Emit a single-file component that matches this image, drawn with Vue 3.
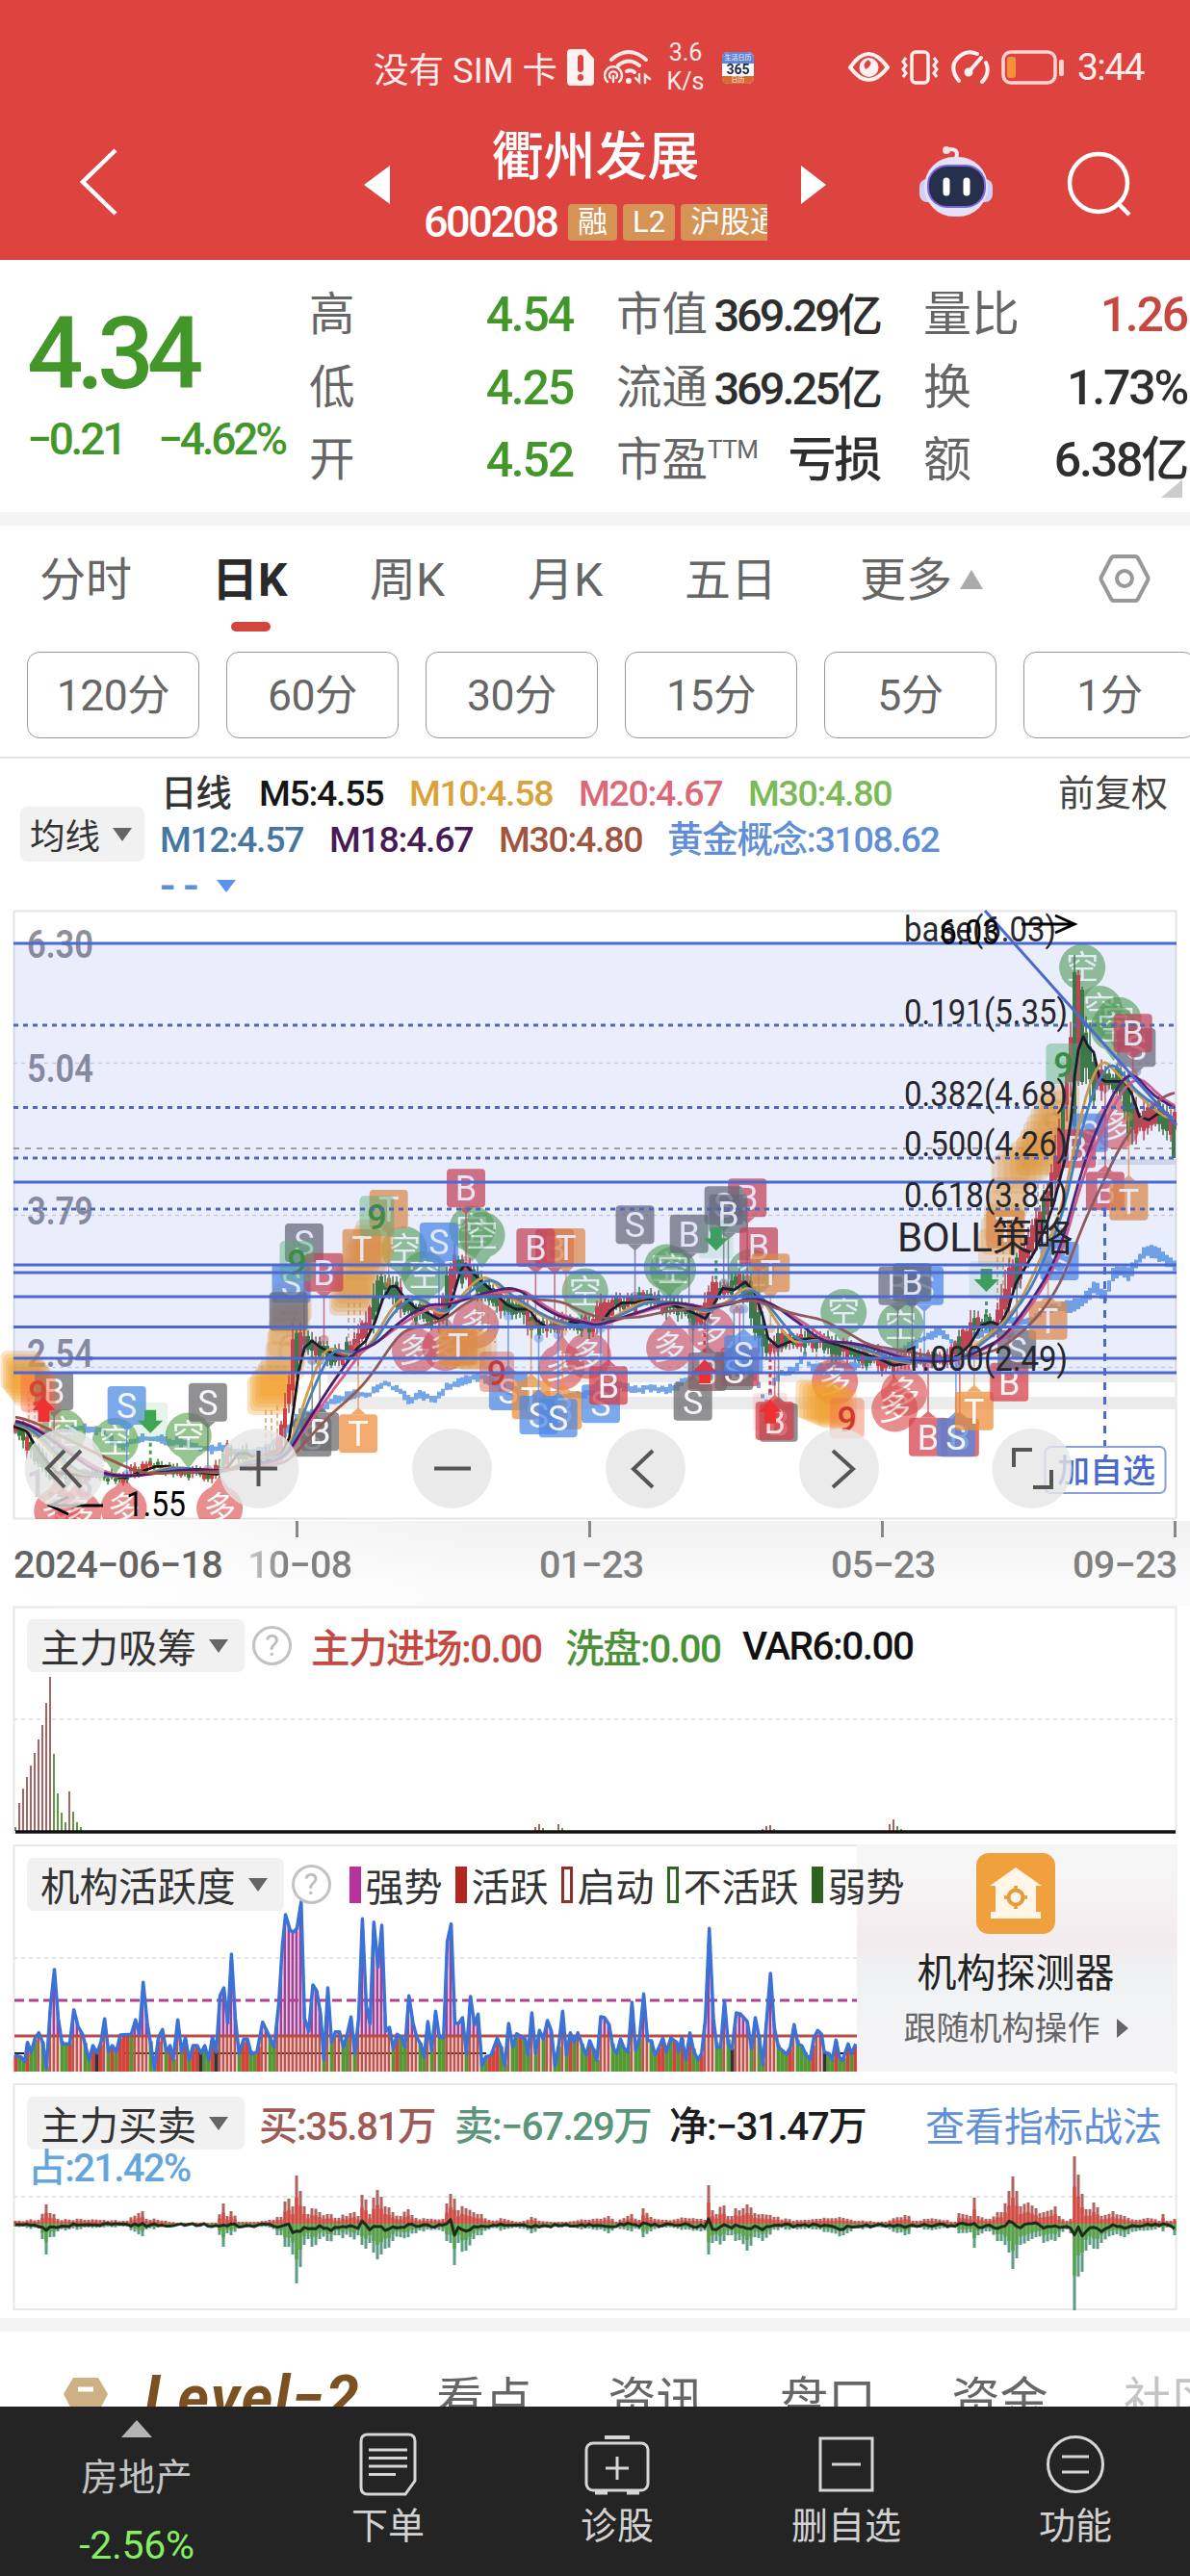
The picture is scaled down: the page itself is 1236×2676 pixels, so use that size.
<script setup>
const stats = [
  [
    { label: '高', value: '4.54', tone: 'down' },
    { label: '低', value: '4.25', tone: 'down' },
    { label: '开', value: '4.52', tone: 'down' },
  ],
  [
    { label: '市值', value: '369.29亿', tone: 'tight' },
    { label: '流通', value: '369.25亿', tone: 'tight' },
    { label: '市盈', sup: 'TTM', value: '亏损' },
  ],
  [
    { label: '量比', value: '1.26', tone: 'up', wide: true },
    { label: '换', value: '1.73%' },
    { label: '额', value: '6.38亿' },
  ],
]

const periods = ['120分', '60分', '30分', '15分', '5分', '1分']

const maRows = [
  [
    { text: '日线', color: '#333', w: 102 },
    { text: 'M5:4.55', color: '#151515', w: 156 },
    { text: 'M10:4.58', color: '#d9a23c', w: 176 },
    { text: 'M20:4.67', color: '#dc6878', w: 176 },
    { text: 'M30:4.80', color: '#7cb957', w: 150 },
  ],
  [
    { text: 'M12:4.57', color: '#4677a3', w: 176 },
    { text: 'M18:4.67', color: '#471b55', w: 176 },
    { text: 'M30:4.80', color: '#a0553f', w: 175 },
    { text: '黄金概念:3108.62', color: '#618fd5', w: 300 },
  ],
]

// seeded noise, so the candles look the same on every load
let seed = 11
const rand = () => {
  seed = (seed * 16807) % 2147483647
  return seed / 2147483647
}

// chart grid units -> pixels
const SX = 2.529
const px = (u) => u / SX
const py = (v) => 1200 + v / 3

const toPoints = (left, right) => {
  const out = []
  for (let i = 0; i < left.length; i += 2) out.push([left[i], left[i + 1]])
  for (let i = 0; i < right.length; i += 2) out.push([right[i] + 1558, right[i + 1]])
  return out
}

const valueAt = (pts, u) => {
  if (u <= pts[0][0]) return pts[0][1]
  for (let i = 1; i < pts.length; i++) {
    if (u <= pts[i][0]) {
      const [a, b] = [pts[i - 1], pts[i]]
      return a[1] + ((b[1] - a[1]) * (u - a[0])) / (b[0] - a[0] || 1)
    }
  }
  return pts[pts.length - 1][1]
}

const m5 = toPoints(
  [36, 845, 70, 860, 90, 900, 120, 950, 150, 990, 230, 1000, 280, 998, 330, 1005, 375, 985, 410, 970, 440, 970, 500, 985, 570, 995, 600, 970, 625, 930, 650, 930, 690, 960, 740, 930, 760, 880, 770, 800, 785, 670, 800, 600, 820, 578, 840, 598, 860, 610, 885, 625, 915, 635, 940, 600, 960, 580, 985, 520, 1005, 450, 1025, 410, 1040, 408, 1060, 440, 1090, 475, 1120, 490, 1155, 512, 1175, 495, 1190, 440, 1210, 360, 1222, 340, 1240, 365, 1270, 400, 1300, 430, 1330, 465, 1355, 480, 1390, 480, 1410, 515, 1435, 535, 1480, 535, 1500, 520, 1530, 525, 1568, 530],
  [20, 525, 45, 485, 75, 460, 110, 460, 150, 450, 190, 460, 240, 480, 280, 500, 295, 510, 315, 470, 340, 415, 370, 420, 400, 395, 425, 430, 445, 500, 460, 570, 485, 597, 520, 580, 570, 572, 610, 580, 640, 590, 690, 610, 740, 630, 790, 655, 820, 650, 860, 635, 920, 640, 960, 625, 990, 590, 1020, 530, 1045, 520, 1070, 530, 1090, 480, 1110, 400, 1130, 360, 1160, 300, 1190, 220, 1210, 150, 1225, 80, 1240, 10, 1255, -110, 1265, -250, 1275, -330, 1287, -370, 1300, -340, 1315, -320, 1330, -240, 1345, -230, 1395, -230, 1415, -190, 1435, -120, 1460, -110, 1485, -130, 1510, -120, 1530, -100],
)
const sector = toPoints(
  [40, 850, 110, 870, 180, 860, 220, 850, 260, 855, 300, 890, 320, 910, 370, 880, 430, 890, 480, 895, 530, 915, 590, 910, 650, 935, 700, 915, 740, 880, 790, 800, 830, 800, 870, 770, 920, 750, 970, 745, 1010, 710, 1050, 735, 1075, 765, 1110, 745, 1145, 765, 1170, 725, 1210, 710, 1250, 690, 1300, 710, 1350, 750, 1400, 765, 1450, 770, 1500, 745, 1568, 745],
  [15, 745, 60, 710, 100, 730, 150, 728, 210, 730, 260, 690, 320, 640, 370, 630, 430, 700, 455, 780, 480, 690, 530, 665, 556, 625, 575, 665, 640, 655, 700, 655, 760, 620, 830, 600, 880, 565, 910, 545, 950, 590, 1000, 560, 1060, 545, 1090, 510, 1150, 520, 1180, 480, 1230, 475, 1280, 460, 1320, 410, 1345, 440, 1370, 360, 1410, 370, 1450, 300, 1490, 310, 1530, 350],
)

const COUNT = 302
const closeAt = (i) => (i < 0 ? 848 + i * 2.2 : valueAt(m5, (16 + i * 4 + 7) * SX))
const average = (n) => {
  const pts = []
  for (let i = 0; i < COUNT; i++) {
    let sum = 0
    for (let k = 0; k < n; k++) sum += closeAt(i - k)
    pts.push(`${16 + i * 4},${py(sum / n).toFixed(1)}`)
  }
  return pts.join(' ')
}

const averages = [
  { color: '#15151a', pts: m5.map((p) => `${px(p[0]).toFixed(1)},${py(p[1]).toFixed(1)}`).join(' ') },
  { color: '#dba03d', pts: average(10) },
  { color: '#4681b8', pts: average(12) },
  { color: '#dd5d80', pts: average(20) },
  { color: '#4e1a68', pts: average(18) },
  { color: '#99584b', pts: average(30) },
]

const candles = []
for (let i = 0; i < COUNT; i++) {
  const x = 16 + i * 4
  const mid = py(closeAt(i))
  const slope = py(closeAt(i + 1)) - py(closeAt(i - 1))
  const size = (x < 300 ? 4 : x > 1120 ? 20 : 10) + Math.min(Math.abs(slope) * 1.2, 34)
  const up = slope < -1 ? rand() < 0.75 : slope > 1 ? rand() < 0.3 : rand() < 0.5
  const h = size * (0.45 + rand() * 0.8)
  candles.push({ x, y: mid - h / 2 + (rand() - 0.5) * 8, h, up, wick: 2 + rand() * size * 0.45 })
}
candles.push({ x: 1116, y: 1010, h: 160, up: false, wick: 18 })
candles.push({ x: 1120, y: 1013, h: 110, up: true, wick: 5 })
candles.push({ x: 1124, y: 1028, h: 96, up: false, wick: 3 })
candles.push({ x: 1219, y: 1165, h: 38, up: false, wick: 0 })

const sectorTicks = []
for (let i = 0; i < COUNT; i++) {
  const x = 16 + i * 4
  const h = (x > 1100 ? 9 : 4) + rand() * 6
  sectorTicks.push({ x, y: py(valueAt(sector, x * SX)) - h / 2 + (rand() - 0.5) * 3, h })
}

const fills = { red: '#d6404a', gray: '#6b6b70', blue: '#4f8ae6', orange: '#ee8f3c' }
// letter, colour, x, y, end of the stem
const L = [
  ['S', 'gray', 799, 273, 600], ['S', 'blue', 765, 400, 0], ['', 'gray', 758, 487, 0], ['B', 'red', 851, 365, 575],
  ['T', 'orange', 950, 290, 0], ['T', 'orange', 1021, 168, 400], ['S', 'blue', 1153, 270, 480], ['B', 'red', 1224, 103, 330],
  ['B', 'red', 1457, 290, 530], ['T', 'orange', 1487, 288, 520], ['B', 'red', 1407, 288, 520], ['T', 'orange', 1203, 595, 0],
  ['B', 'gray', 142, 735, 970], ['S', 'blue', 333, 780, 995], ['S', 'gray', 546, 770, 980],
  ['S', 'gray', 820, 880, 640], ['B', 'gray', 840, 862, 640], ['T', 'orange', 941, 868, 600],
  ['S', 'blue', 1335, 735, 500], ['T', 'orange', 1395, 763, 530], ['B', 'orange', 1478, 795, 550], ['S', 'blue', 1415, 810, 570], ['S', 'blue', 1466, 820, 560],
]
const R = [
  ['S', 'gray', 110, 217, 440], ['B', 'gray', 252, 245, 480], ['B', 'red', 405, 133, 390], ['S', 'gray', 343, 157, 400], ['B', 'gray', 355, 182, 410],
  ['B', 'red', 435, 285, 470], ['T', 'orange', 466, 367, 540], ['S', 'blue', 20, 775, 540], ['B', 'red', 40, 718, 530],
  ['S', 'gray', 262, 767, 520], ['B', 'gray', 300, 675, 520], ['B', 'red', 385, 660, 480], ['S', 'gray', 370, 672, 480], ['S', 'blue', 395, 622, 480], ['B', 'gray', 487, 833, 600],
  ['B', 'red', 477, 828, 600], ['B', 'gray', 800, 407, 640], ['S', 'blue', 870, 407, 640], ['B', 'gray', 838, 397, 640],
  ['B', 'red', 880, 878, 650], ['B', 'red', 963, 880, 650], ['S', 'blue', 953, 880, 650], ['T', 'orange', 1001, 797, 590],
  ['B', 'red', 1093, 707, 560], ['S', 'gray', 1113, 605, 400], ['T', 'orange', 1195, 515, 330], ['S', 'blue', 1225, 330, 240],
  ['T', 'orange', 1083, 230, 0], ['S', 'blue', 1302, -70, 0], ['B', 'red', 1270, -20, 0], ['B', 'red', 1345, 112, -210], ['T', 'orange', 1407, 143, -120],
  ['S', 'gray', 1427, -335, -260], ['B', 'red', 1418, -380, -250],
]
const badge = (b, dx) => ({
  ch: b[0],
  fill: fills[b[1]],
  x: px(b[2] + dx),
  y: py(b[3]),
  end: b[4] === 0 ? null : py(b[4]),
  tip: b[4] === 0 ? 0 : b[4] > b[3] ? 1 : -1,
})
const badges = [...L.map((b) => badge(b, 0)), ...R.map((b) => badge(b, 1558))]

const balloon = (x, y) => ({ x: px(x), y: py(y) })
const bears = [[165, 865], [303, 892], [495, 875], [1062, 295], [1115, 372], [1240, 230], [1266, 250], [1537, 425], [1752, 350], [1768, 358], [1973, 365], [2216, 490], [2366, 530], [2843, -585], [2888, -455], [2938, -420], [2925, -395]].map((p) => balloon(...p))
const bulls = [[150, 1108], [205, 1115], [325, 1100], [577, 1100], [1090, 610], [1170, 600], [1250, 530], [1475, 660], [1545, 625], [1758, 600], [1868, 545], [2193, 705], [2375, 740], [2350, 790], [2933, -90]].map((p) => balloon(...p))

// stacked translucent tiles of the 1-9 countdown
const tiles = []
const stack = (n, x0, y0, x1, y1, text = '') => {
  for (let i = 0; i < n; i++) {
    const t = i / (n - 1)
    tiles.push({ x: px(x0 + (x1 - x0) * t), y: py(y0 + (y1 - y0) * t), ch: text[i] || '' })
  }
}
stack(6, 52, 670, 85, 720)
stack(6, 768, 460, 748, 640, '9 7 6')
stack(6, 700, 750, 735, 690)
stack(5, 985, 260, 960, 330)
stack(6, 915, 440, 945, 380)
stack(5, 1195, 600, 1255, 610)
stack(7, 2140, 760, 2200, 790)
stack(6, 2655, 60, 2735, -10)
stack(8, 2720, 0, 2785, -160, '    56 8')
stack(5, 2620, 290, 2650, 130)

const nines = [
  { x: px(990), y: py(190), fill: '#57b56b', color: '#3a9130' },
  { x: px(780), y: py(330), fill: '#57b56b', color: '#3a9130' },
  { x: px(2793), y: py(-285), fill: '#57b56b', color: '#3a9130' },
  { x: px(100), y: py(738), fill: '#f36a3c', color: '#d8432f' },
  { x: px(1305), y: py(675), fill: '#e0563f', color: '#d0392f' },
  { x: px(2225), y: py(820), fill: '#f0744a', color: '#d0392f' },
]
const arrows = [
  { x: px(395), y: py(830), down: true, end: py(960) },
  { x: px(1881), y: py(262), down: true, end: py(400) },
  { x: px(2591), y: py(390), down: true, end: py(520) },
  { x: px(115), y: py(795), down: false },
  { x: px(1851), y: py(675), down: false, end: py(540) },
  { x: px(2023), y: py(800), down: false, end: py(600) },
]

const solid = [980, 1228, 1314, 1322, 1347, 1378.5, 1411, 1426]
const dotted = [1065, 1150.5, 1203, 1256]
const scale = [
  ['6.30', 995], ['5.04', 1124], ['3.79', 1272], ['2.54', 1420], ['1.28', 1555],
]
const fib = [
  ['base(6.03)', 978, 158], ['0.191(5.35)', 1064, 170], ['0.382(4.68)', 1149, 170],
  ['0.500(4.26)', 1201, 170], ['0.618(3.84)', 1254, 170], ['1.000(2.49)', 1424, 170],
]

// 主力吸筹: x, height, colour
const absorb = [
  [16, 4, 'g'], [20, 29, 'r'], [24, 44, 'r'], [28, 56, 'r'], [32, 68, 'r'], [36, 81, 'r'], [40, 95, 'r'], [44, 110, 'r'], [48, 133, 'r'], [52, 160, 'r'],
  [56, 80, 'g'], [60, 39, 'g'], [64, 19, 'g'], [68, 9, 'g'], [72, 41, 'r'], [76, 20, 'g'], [80, 9, 'g'], [84, 4, 'g'],
  [556, 4, 'r'], [560, 7, 'r'], [564, 3, 'g'], [580, 7, 'r'], [584, 3, 'g'], [792, 2, 'r'], [796, 5, 'r'], [800, 6, 'r'], [804, 2, 'g'],
  [924, 7, 'r'], [928, 12, 'r'], [932, 5, 'g'], [936, 2, 'g'],
]

const activity = toPoints(
  [38, 675, 55, 680, 65, 695, 72, 635, 82, 665, 92, 622, 102, 605, 112, 635, 122, 715, 132, 530, 143, 408, 153, 560, 163, 640, 183, 640, 194, 533, 205, 585, 217, 610, 234, 690, 244, 645, 255, 668, 265, 635, 275, 562, 285, 665, 295, 645, 305, 665, 316, 612, 345, 610, 356, 565, 366, 610, 376, 448, 387, 575, 397, 650, 406, 718, 416, 620, 427, 595, 437, 665, 447, 645, 455, 690, 467, 565, 477, 665, 487, 620, 497, 690, 507, 645, 518, 645, 528, 668, 538, 645, 548, 690, 558, 618, 568, 665, 578, 490, 588, 465, 598, 575, 608, 360, 618, 560, 628, 670, 640, 625, 650, 625, 660, 672, 675, 665, 690, 572, 705, 610, 720, 650, 732, 520, 742, 330, 750, 237, 762, 285, 770, 292, 780, 280, 791, 197, 800, 560, 811, 600, 822, 456, 832, 475, 842, 545, 851, 690, 861, 465, 871, 635, 881, 602, 892, 602, 902, 650, 912, 610, 922, 556, 932, 670, 942, 560, 952, 250, 962, 520, 972, 578, 982, 260, 993, 400, 1003, 270, 1013, 600, 1023, 588, 1033, 655, 1043, 610, 1055, 620, 1064, 650, 1074, 490, 1085, 575, 1095, 620, 1105, 640, 1114, 680, 1124, 570, 1134, 660, 1144, 538, 1154, 618, 1165, 620, 1175, 320, 1185, 266, 1195, 575, 1205, 575, 1215, 558, 1225, 670, 1236, 492, 1246, 580, 1256, 547, 1266, 708, 1276, 680, 1290, 675, 1306, 622, 1316, 650, 1326, 708, 1336, 576, 1347, 650, 1357, 608, 1380, 625, 1387, 675, 1397, 543, 1407, 670, 1417, 598, 1427, 625, 1438, 567, 1448, 598, 1458, 708, 1468, 640, 1478, 538, 1488, 675, 1498, 605, 1508, 635, 1518, 605, 1528, 640, 1540, 675, 1549, 630, 1560, 660],
  [10, 690, 20, 555, 30, 558, 42, 580, 52, 650, 62, 670, 72, 625, 82, 655, 92, 665, 102, 510, 112, 660, 122, 620, 133, 484, 143, 630, 153, 630, 163, 675, 173, 650, 183, 622, 193, 665, 204, 622, 220, 635, 224, 665, 233, 620, 244, 690, 254, 605, 264, 660, 275, 690, 285, 670, 295, 560, 305, 280, 316, 560, 325, 650, 335, 650, 345, 505, 355, 640, 365, 655, 376, 543, 387, 547, 405, 570, 416, 655, 426, 558, 436, 620, 446, 705, 456, 560, 466, 420, 476, 590, 487, 650, 497, 660, 508, 672, 518, 650, 528, 580, 538, 640, 548, 645, 560, 675, 570, 688, 580, 620, 590, 598, 600, 610, 607, 665, 620, 670, 628, 690, 638, 628, 648, 685, 655, 692, 670, 640, 678, 670, 690, 640],
)
const activityLine = activity.map((p) => `${px(p[0]).toFixed(1)},${(1910 + p[1] / 3).toFixed(1)}`).join(' ')
const activityBars = []
for (let i = 0; i < 219; i++) {
  const x = 16 + i * 4
  const v = valueAt(activity, x * SX)
  const y = 1910 + v / 3
  const hot = y < 2113
  const rising = valueAt(activity, (x - 4) * SX) > v - 2
  const color = hot ? '#c1514b' : [21, 48, 52, 186, 208, 210].includes(i) ? '#333' : rising && rand() < 0.8 ? '#d3433a' : '#549834'
  activityBars.push({ x, y, hot, color, w: hot ? 2.8 : 4.2 })
}

// 主力买卖: x, buy height, sell height
const flow = [
  [15, 3, 3], [40, 4, 5], [47, 20, 32], [52, 11, 14], [60, 5, 8], [90, 4, 4], [130, 3, 3], [148, 13, 13], [153, 5, 6], [165, 4, 4], [185, 1, 1], [225, 1, 2],
  [232, 21, 24], [237, 8, 10], [241, 13, 12], [250, 2, 4], [265, 2, 3], [280, 4, 4], [290, 7, 12], [296, 23, 24], [300, 26, 24], [304, 18, 32], [308, 50, 62], [312, 34, 45], [316, 18, 22], [320, 10, 16],
  [325, 16, 24], [332, 12, 16], [340, 10, 18], [350, 6, 12], [365, 11, 14], [372, 8, 12], [376, 30, 22], [380, 25, 26], [384, 10, 20], [388, 27, 30], [392, 35, 37], [396, 28, 32], [400, 18, 26], [408, 12, 18], [416, 8, 14], [424, 15, 14], [432, 6, 10], [445, 5, 6], [460, 5, 8],
  [464, 21, 18], [468, 31, 20], [472, 26, 43], [476, 14, 20], [484, 16, 28], [492, 12, 16], [498, 10, 12], [508, 4, 6], [525, 5, 6], [540, 2, 5], [553, 7, 10], [560, 3, 5], [580, 2, 4], [610, 4, 5], [625, 5, 6], [632, 8, 10], [640, 2, 4],
  [656, 10, 8], [664, 4, 6], [668, 16, 14], [676, 7, 8], [690, 4, 4], [712, 6, 6], [728, 5, 8], [732, 4, 7], [736, 40, 32], [740, 14, 20], [744, 10, 18], [752, 19, 18], [758, 8, 12], [764, 16, 18], [776, 20, 28], [784, 11, 14], [792, 10, 18], [804, 7, 6], [825, 3, 5],
  [850, 5, 6], [876, 6, 12], [890, 3, 5], [920, 2, 4], [940, 9, 12], [950, 3, 4], [972, 5, 6], [992, 2, 3], [996, 11, 10], [1008, 8, 9], [1012, 27, 25], [1016, 8, 12], [1028, 5, 8], [1040, 12, 18], [1048, 34, 30], [1052, 49, 47], [1056, 34, 36], [1060, 18, 22],
  [1068, 22, 18], [1076, 16, 14], [1084, 12, 20], [1096, 18, 18], [1100, 8, 14], [1108, 3, 6], [1112, 5, 10], [1116, 70, 90], [1120, 51, 55], [1124, 31, 50], [1128, 15, 28], [1136, 22, 26], [1144, 8, 20], [1156, 13, 12], [1168, 8, 14], [1180, 4, 8], [1192, 6, 7], [1204, 3, 4], [1208, 10, 8], [1214, 3, 4], [1220, 5, 12],
]
const buys = flow.map((f) => [f[0], f[1]])
const sells = flow.map((f) => [f[0], f[2]])
const flowBars = []
const net = []
for (let i = 0; i < COUNT; i++) {
  const x = 16 + i * 4
  const k = 0.75 + rand() * 0.5
  const near = flow.find((f) => Math.abs(f[0] - x) < 2.1)
  const buy = near ? near[1] : valueAt(buys, x) * k
  const sell = near ? near[2] : valueAt(sells, x) * k
  flowBars.push({ x, buy, sell })
  net.push(`${x},${(2311 + Math.max(-11, Math.min(17, (sell - buy) * 0.6)) + (rand() - 0.5) * 3).toFixed(1)}`)
}

const signals = [
  { name: '强势', color: '#b8319d', solid: true },
  { name: '活跃', color: '#b42720', solid: true },
  { name: '启动', color: '#8e3029', solid: false },
  { name: '不活跃', color: '#346326', solid: false },
  { name: '弱势', color: '#2b621d', solid: true },
]
</script>

<template>
  <div class="screen">
    <header class="top">
      <div class="status">
        <span class="sim-text">没有 SIM 卡</span>
        <svg class="i-sim" width="28" height="38" viewBox="0 0 28 38"><path d="M4 0H19L28 10V34Q28 38 24 38H4Q0 38 0 34V4Q0 0 4 0Z" fill="#fff1f0" /><path d="M14 9V21M14 29V30" stroke="#dd4440" stroke-width="6" stroke-linecap="round" /></svg>
        <svg class="i-wifi" width="50" height="38" viewBox="0 0 50 38" fill="none" stroke="#ffe9e7" stroke-width="4" stroke-linecap="round">
          <path d="M8 11Q26 -5 44 11M15 17Q26 8 37 17" /><path d="M24 23Q28 21 32 24" />
          <circle cx="26" cy="33" r="3" fill="#ffe9e7" stroke="none" />
          <path d="M4 34A9 9 0 1 1 16 34M7 30A4 4 0 1 1 13 30M10 28V34" stroke-width="2.400" />
          <path d="M37 26V34L33 30M43 35V27L48 31" stroke-width="2.400" />
        </svg>
        <div class="speed"><span>3.6</span><span>K/s</span></div>
        <div class="app365"><i>生活日历</i><b>365</b><em>日历</em></div>
        <svg class="i-eye" width="43" height="32" viewBox="0 0 43 32"><path d="M2 16Q21 -12 41 16Q21 42 2 16Z" fill="none" stroke="#fff1f0" stroke-width="4" /><circle cx="21.500" cy="16" r="10" fill="#fff1f0" /><path d="M21 8Q27 13 18 18Q14 12 21 8Z" fill="#dd4440" /></svg>
        <svg class="i-vib" width="43" height="36" viewBox="0 0 43 36" fill="none" stroke="#fff1f0" stroke-width="3.500"><rect x="13" y="2" width="17" height="32" rx="4" /><path d="M7 8L4 12L7 16L4 20L7 24L4 28M36 8L39 12L36 16L39 20L36 24L39 28" stroke-width="3" /></svg>
        <svg class="i-gauge" width="40" height="36" viewBox="0 0 40 36" fill="none" stroke="#fff1f0" stroke-width="4" stroke-linecap="round"><path d="M8 32Q-3 18 7 8Q16 -1 27 4M36 13Q41 24 32 33M18 23L31 8" /><circle cx="18" cy="23" r="2.500" /></svg>
        <svg class="i-bat" width="66" height="36" viewBox="0 0 66 36"><rect x="2" y="2" width="54" height="32" rx="8" fill="none" stroke="#fbd3cf" stroke-width="3.500" /><rect x="6" y="7" width="9" height="22" rx="3" fill="#f3923a" /><rect x="60" y="10" width="5" height="17" rx="2" fill="#fbd3cf" /></svg>
        <span class="clock">3:44</span>
      </div>
      <div class="nav">
        <svg class="back" width="40" height="70" viewBox="0 0 40 70"><path d="M37 2L3 35L37 68" fill="none" stroke="#fff" stroke-width="4.500" /></svg>
        <svg class="prev" width="27" height="40" viewBox="0 0 27 40"><path d="M27 0V40L0 20Z" fill="#fff" /></svg>
        <div class="stock">
          <h1>衢州发展</h1>
          <div class="code">
            <span class="num">600208</span>
            <i>融</i><i>L2</i><i>沪股通</i>
          </div>
        </div>
        <svg class="next" width="26" height="40" viewBox="0 0 26 40"><path d="M0 0V40L26 20Z" fill="#fff" /></svg>
        <svg class="robot" width="80" height="74" viewBox="0 0 80 74">
          <path d="M40 12Q44 2 31 3" fill="none" stroke="#f3e7f5" stroke-width="4" stroke-linecap="round" /><circle cx="30" cy="4" r="4" fill="#f7dede" />
          <rect x="2" y="34" width="76" height="24" rx="8" fill="#cfd0f4" />
          <rect x="7" y="11" width="66" height="62" rx="31" fill="#e4e1f8" />
          <rect x="11" y="20" width="59" height="43" rx="20" fill="#27304a" stroke="#7b65d8" stroke-width="2" />
          <path d="M30 36V48M51 36V48" stroke="#fff" stroke-width="7" stroke-linecap="round" />
        </svg>
        <svg class="search" width="68" height="68" viewBox="0 0 68 68" fill="none" stroke="#fff" stroke-width="4.500"><circle cx="33" cy="33" r="30" /><path d="M53 54L65 66" /></svg>
      </div>
    </header>

    <section class="quote">
      <div class="price">
        <div class="last">4.34</div>
        <div class="change"><span>−0.21</span><span>−4.62%</span></div>
      </div>
      <div v-for="(col, c) in stats" :key="c" class="col">
        <div v-for="s in col" :key="s.label" class="stat">
          <span class="label" :class="{ wide: s.wide || c === 2 }">{{ s.label }}<sup v-if="s.sup">{{ s.sup }}</sup></span>
          <span class="value" :class="s.tone">{{ s.value }}</span>
        </div>
      </div>
      <svg class="corner" width="22" height="19" viewBox="0 0 22 19"><path d="M22 0V19H0Z" fill="#ccc" /></svg>
    </section>

    <nav class="tabs">
      <span class="tab t1">分时</span>
      <span class="tab t2 active">日K</span>
      <span class="tab t3">周K</span>
      <span class="tab t4">月K</span>
      <span class="tab t5">五日</span>
      <span class="tab t6">更多<svg width="24" height="20" viewBox="0 0 24 20"><path d="M12 0L24 20H0Z" fill="#aaa" /></svg></span>
      <svg class="hex" width="54" height="50" viewBox="0 0 54 50" fill="none" stroke="#999" stroke-width="4"><path d="M16 2H38Q40 2 41 4L51 23Q52 25 51 27L41 46Q40 48 38 48H16Q14 48 13 46L3 27Q2 25 3 23L13 4Q14 2 16 2Z" /><circle cx="27" cy="25" r="8" /></svg>
    </nav>
    <div class="periods">
      <span v-for="p in periods" :key="p">{{ p }}</span>
    </div>

    <section class="legend">
      <div class="picker small">均线<svg width="20" height="14" viewBox="0 0 20 14"><path d="M0 0H20L10 14Z" fill="#666" /></svg></div>
      <div class="ma">
        <div v-for="(row, r) in maRows" :key="r" class="ma-row">
          <span v-for="m in row" :key="m.text" :style="{ color: m.color, width: m.w + 'px' }">{{ m.text }}</span>
        </div>
        <div class="ma-row more">--<svg width="20" height="13" viewBox="0 0 20 13"><path d="M0 0H20L10 13Z" fill="#5b93e8" /></svg></div>
      </div>
      <span class="adjust">前复权</span>
    </section>

    <svg class="kline" width="1236" height="638" viewBox="0 942 1236 638">
      <defs>
        <clipPath id="plot"><rect x="14" y="946" width="1208" height="632" /></clipPath>
      </defs>
      <rect x="14.500" y="946.500" width="1207" height="631" fill="#fff" stroke="#e4e4e4" stroke-width="2" />
      <rect x="340" y="1427" width="882" height="9" fill="#ebebeb" />
      <rect x="340" y="1451" width="882" height="13" fill="#ebebeb" />
      <rect x="1140" y="1204" width="82" height="6" fill="#e2e2ea" />
      <path d="M14 1104.500H1222M14 1262.500H1222M14 1420.500H1222" stroke="#d6d6dc" stroke-width="1.500" stroke-dasharray="4 4" />
      <path d="M14 1193H1222" stroke="#b3a48f" stroke-width="2" stroke-dasharray="6 6" />
      <g class="scale">
        <text v-for="s in scale" :key="s[0]" x="28" :y="s[1]" textLength="69" lengthAdjust="spacingAndGlyphs">{{ s[0] }}</text>
      </g>

      <g clip-path="url(#plot)">
        <rect v-for="t in sectorTicks" :key="'s' + t.x" :x="t.x - 2" :y="t.y" width="4" :height="t.h" fill="#74a6e8" />
        <g v-for="(b, i) in bulls" :key="'u' + i" class="balloon" fill="#dc4a4c" :transform="`translate(${b.x} ${b.y})`">
          <path d="M0 -34L9 -22A24 24 0 1 1 -9 -22Z" /><text y="12">多</text>
        </g>
        <g v-for="(b, i) in bears" :key="'d' + i" class="balloon" fill="#58a24c" :transform="`translate(${b.x} ${b.y})`">
          <path d="M0 34L9 22A24 24 0 1 0 -9 22Z" /><text y="12">空</text>
        </g>
      </g>
      <path d="M30 1452V1478M36 1452V1485M42 1452V1490M553 1440V1470M760 1390V1430" stroke="#dd9351" stroke-width="1" stroke-dasharray="4 2" />
      <path d="M276 1465V1510M282 1465V1505M288 1460V1500M362 1345V1405M368 1345V1400M374 1345V1395M495 1340V1375M501 1340V1378M507 1340V1385M514 1345V1395M848 1390V1415M856 1392V1420M866 1395V1425M1036 1290V1370M1042 1290V1365M1049 1290V1360M1078 1230V1290M1084 1230V1270" stroke="#d7853c" stroke-width="1.200" stroke-dasharray="5 3" />

      <g v-for="(t, i) in tiles" :key="'t' + i" class="tile">
        <rect :x="t.x - 20" :y="t.y - 20" width="40" height="40" rx="6" />
        <text :x="t.x" :y="t.y + 13">{{ t.ch }}</text>
      </g>

      <g v-for="c in candles" :key="'c' + c.x + c.y">
        <rect :x="c.x - 0.7" :y="c.y - c.wick" width="1.500" :height="c.h + c.wick * 2" :fill="c.up ? '#cd4144' : '#3d7a37'" />
        <rect :x="c.x - 2" :y="c.y" width="4" :height="c.h" :fill="c.up ? '#cd4144' : '#3d7a37'" />
      </g>

      <g v-for="(b, i) in badges" :key="'b' + i" class="badge">
        <g class="plate">
          <line v-if="b.end" :x1="b.x" :x2="b.x" :y1="b.y + b.tip * 24" :y2="b.end" :stroke="b.fill" stroke-width="1.600" />
          <circle v-if="b.end" :cx="b.x" :cy="b.end" r="5" :fill="b.fill" opacity=".6" />
          <rect :x="b.x - 20" :y="b.y - 20" width="40" height="40" rx="4" :fill="b.fill" />
          <path v-if="b.tip" :d="`M${b.x - 8} ${b.y + b.tip * 20}H${b.x + 8}L${b.x} ${b.y + b.tip * 27}Z`" :fill="b.fill" />
        </g>
        <text :x="b.x" :y="b.y + 13">{{ b.ch }}</text>
      </g>
      <g v-for="(n, i) in nines" :key="'n' + i" class="nine">
        <rect :x="n.x - 18" :y="n.y - 21" width="36" height="42" rx="5" :fill="n.fill" />
        <text :x="n.x" :y="n.y + 14" :fill="n.color">9</text>
      </g>
      <g v-for="(a, i) in arrows" :key="'a' + i">
        <rect :x="a.x - 18" :y="a.y - 20" width="36" height="40" rx="4" :fill="a.down ? '#56b56a' : '#f05050'" opacity=".15" />
        <path :d="a.down ? 'M-6 -12H6V-1H13L0 12L-13 -1H-6Z' : 'M-6 12H6V0H12L0 -13L-12 0H-6Z'" :transform="`translate(${a.x} ${a.y})`" :fill="a.down ? '#3ea552' : '#ee3033'" />
        <line v-if="a.end" :x1="a.x" :x2="a.x" :y1="a.y + (a.down ? 22 : -20)" :y2="a.end" :stroke="a.down ? '#3ea552' : '#ee3033'" stroke-width="3" stroke-dasharray="4 4" />
      </g>

      <g fill="none" stroke-width="2.800" stroke-linejoin="round">
        <polyline v-for="(m, i) in averages" :key="'m' + i" :points="m.pts" :stroke="m.color" />
      </g>

      <!-- drawn fibonacci zone -->
      <rect x="14" y="980" width="1208" height="446" fill="#4a66e6" opacity=".115" />
      <path v-for="y in solid" :key="'l' + y" :d="`M14 ${y}H1222`" stroke="#4b69cf" stroke-width="3" />
      <path v-for="y in dotted" :key="'o' + y" :d="`M14 ${y}H1222`" stroke="#4f68b8" stroke-width="3" stroke-dasharray="5 5" />
      <path d="M1023 946L1222 1169" stroke="#4b69cf" stroke-width="3" />
      <path d="M1147.500 1256V1503" stroke="#4b69cf" stroke-width="3" stroke-dasharray="8 7" />
      <g class="fib">
        <text v-for="f in fib" :key="f[0]" x="939" :y="f[1]" :textLength="f[2]" lengthAdjust="spacingAndGlyphs">{{ f[0] }}</text>
        <text x="976" y="981" textLength="62" lengthAdjust="spacingAndGlyphs" class="peak">6.03</text>
        <text x="932" y="1300" textLength="182" class="boll">BOLL策略</text>
      </g>
      <path d="M1061 960H1115M1096 951L1116 960L1096 969" fill="none" stroke="#000" stroke-width="3" />
      <path d="M107 1564H52M71 1573L52 1564L71 1555" fill="none" stroke="#000" stroke-width="3" />
      <text x="131" y="1575" class="low" textLength="62" lengthAdjust="spacingAndGlyphs">1.55</text>

      <rect x="1085.500" y="1503" width="125" height="48" rx="6" fill="#fff" stroke="#8aa0dc" stroke-width="2" />
      <text x="1098" y="1540" class="watch">加自选</text>

      <g fill="#e6e6e6" opacity=".8">
        <circle cx="67" cy="1525.500" r="41.500" /><circle cx="269" cy="1525.500" r="41.500" /><circle cx="469.500" cy="1525.500" r="41.500" />
        <circle cx="670.500" cy="1525.500" r="41.500" /><circle cx="871.500" cy="1525.500" r="41.500" /><circle cx="1072" cy="1525.500" r="41.500" />
      </g>
      <g fill="none" stroke="#555" stroke-width="4">
        <path d="M67 1507L49 1525.500L67 1545M84 1507L66 1525.500L84 1545" />
        <path d="M249 1525.500H288M268.500 1507V1544M451 1525.500H489" />
        <path d="M678 1507L658 1526L678 1545M865 1507L886 1526L865 1545" />
        <path d="M1053 1524V1506H1072M1092 1527V1545H1073" />
      </g>
    </svg>

    <div class="axis">
      <i class="k1"></i><i class="k2"></i><i class="k3"></i><i class="k4"></i>
      <span class="d0">2024−06−18</span><span class="d1">10−08</span><span class="d2">01−23</span><span class="d3">05−23</span><span class="d4">09−23</span>
    </div>

    <section class="panel p1">
      <svg width="1236" height="240" viewBox="0 1668 1236 240">
        <path d="M14.500 1905V1669.500H1221.500V1905" fill="none" stroke="#e8e8e8" stroke-width="2" />
        <path d="M14 1786H1222" stroke="#e4e4e4" stroke-width="2" stroke-dasharray="4 4" />
        <rect v-for="b in absorb" :key="b[0]" :x="b[0] - 1" :y="1902 - b[1]" width="2" :height="b[1]" :fill="b[2] === 'r' ? '#a86460' : '#5e9a44'" />
        <path d="M16 1903H1221" stroke="#111" stroke-width="3.500" />
      </svg>
      <div class="bar">
        <div class="picker">主力吸筹<svg width="20" height="14" viewBox="0 0 20 14"><path d="M0 0H20L10 14Z" fill="#666" /></svg></div>
        <span class="help">?</span>
        <span class="item a1">主力进场:0.00</span><span class="item a2">洗盘:0.00</span><span class="item a3">VAR6:0.00</span>
      </div>
    </section>

    <section class="panel p2">
      <svg width="1236" height="240" viewBox="0 1916 1236 240">
        <path d="M14.500 2154V1917H1221.500V2154" fill="none" stroke="#e8e8e8" stroke-width="2" />
        <path d="M14 2034H890" stroke="#e4e4e4" stroke-width="2" stroke-dasharray="4 4" />
        <path d="M15 2133H25M130 2133H505M870 2133H890" stroke="#222" stroke-width="2" />
        <g v-for="b in activityBars" :key="b.x">
          <rect v-if="b.hot" :x="b.x - 1.5" :y="b.y" width="2.800" :height="2115 - b.y" fill="#a03f93" />
          <rect :x="b.x - 1.5" :y="Math.max(b.y, 2115)" :width="b.w" :height="2152 - Math.max(b.y, 2115)" :fill="b.color" />
        </g>
        <path d="M15 2078H890" stroke="#ad4390" stroke-width="3" stroke-dasharray="10 5" />
        <path d="M15 2115H890" stroke="#bd4b43" stroke-width="3" />
        <polyline :points="activityLine" fill="none" stroke="#3b72d6" stroke-width="3.500" stroke-linejoin="round" />
      </svg>
      <div class="ad-wrap">
        <div class="ad">
          <svg width="82" height="84" viewBox="0 0 82 84">
            <rect width="82" height="84" rx="13" fill="#f0a03c" />
            <path d="M41 15L68 34H62V61H67V68H15V61H20V34H14Z" fill="#fff6e8" />
            <circle cx="41" cy="46" r="7.500" fill="none" stroke="#e79a3a" stroke-width="4" />
            <path d="M41 34V39M41 53V58M29 46H34M48 46H53" stroke="#e79a3a" stroke-width="3.500" />
          </svg>
          <b>机构探测器</b>
          <span>跟随机构操作<svg width="12" height="20" viewBox="0 0 12 20"><path d="M0 0L12 10L0 20Z" fill="#666" /></svg></span>
        </div>
      </div>
      <div class="bar">
        <div class="picker">机构活跃度<svg width="20" height="14" viewBox="0 0 20 14"><path d="M0 0H20L10 14Z" fill="#666" /></svg></div>
        <span class="help">?</span>
        <div class="signals">
          <span v-for="s in signals" :key="s.name"><i :style="{ borderColor: s.color, background: s.solid ? s.color : '#fff' }"></i>{{ s.name }}</span>
        </div>
      </div>
    </section>

    <section class="panel p3">
      <svg width="1236" height="244" viewBox="0 2164 1236 244">
        <rect x="14.500" y="2165" width="1207" height="234" fill="none" stroke="#e8e8e8" stroke-width="2" />
        <path d="M14 2282H1222" stroke="#e4e4e4" stroke-width="2" stroke-dasharray="4 4" />
        <g v-for="b in flowBars" :key="b.x">
          <rect :x="b.x - 1.5" :y="2310 - b.buy" width="3" :height="b.buy" fill="#b0635f" />
          <rect :x="b.x - 1.5" y="2310" width="3" :height="b.sell" fill="#5f9c86" />
          <rect :x="b.x - 1.7" :y="2310 - b.buy * 0.55" width="3.400" :height="b.buy * 0.55" fill="#d34a43" />
          <rect :x="b.x - 1.7" y="2310" width="3.400" :height="b.sell * 0.6" fill="#58a046" />
        </g>
        <polyline :points="net.join(' ')" fill="none" stroke="#1d2a17" stroke-width="3" stroke-linejoin="round" />
      </svg>
      <div class="flow-head">
        <div class="bar">
          <div class="picker">主力买卖<svg width="20" height="14" viewBox="0 0 20 14"><path d="M0 0H20L10 14Z" fill="#666" /></svg></div>
          <span class="item f1">买:35.81万</span><span class="item f2">卖:−67.29万</span><span class="item f3">净:−31.47万</span>
          <span class="link">查看指标战法</span>
        </div>
        <div class="ratio">占:21.42%</div>
      </div>
    </section>

    <div class="info-tabs">
      <svg width="46" height="42" viewBox="0 0 46 42"><path d="M10 0H36L46 17L33 42H13L0 17Z" fill="#cdb083" /><path d="M15 12H31" stroke="#fff" stroke-width="5" /></svg>
      <span class="level">Level−2</span>
      <span class="w1">看点</span><span class="w2">资讯</span><span class="w3">盘口</span><span class="w4">资金</span><span class="w5">社区</span>
    </div>

    <footer>
      <div class="sector">
        <svg width="32" height="18" viewBox="0 0 32 18"><path d="M16 0L32 18H0Z" fill="#b4b4b4" /></svg>
        <span>房地产</span>
        <b>-2.56%</b>
      </div>
      <div class="tool">
        <svg width="60" height="66" viewBox="0 0 60 66" fill="none" stroke="#d6d6d6" stroke-width="3"><path d="M9 2H51Q58 2 58 9V50L48 64H9Q2 64 2 57V9Q2 2 9 2Z" /><path d="M10 18H50M10 26.500H50M10 35H50M10 43.500H38" /></svg>
        <span>下单</span>
      </div>
      <div class="tool">
        <svg width="68" height="66" viewBox="0 0 68 66" fill="none" stroke="#d6d6d6" stroke-width="3"><path d="M21 5H47" stroke-width="4" /><rect x="2" y="11" width="64" height="49" rx="7" /><path d="M22 37H46M34 25V49" /><path d="M11 62H24M44 62H57" stroke-width="5" /></svg>
        <span>诊股</span>
      </div>
      <div class="tool">
        <svg width="58" height="66" viewBox="0 0 58 66" fill="none" stroke="#d6d6d6" stroke-width="3"><rect x="2" y="6" width="54" height="54" /><path d="M14 33H44" /></svg>
        <span>删自选</span>
      </div>
      <div class="tool">
        <svg width="62" height="66" viewBox="0 0 62 66" fill="none" stroke="#d6d6d6" stroke-width="3"><circle cx="31" cy="33" r="28.500" /><path d="M17 25H45M17 41H45" /></svg>
        <span>功能</span>
      </div>
    </footer>
  </div>
</template>

<style>
body {
  margin: 0;
  background: #fff;
}
</style>

<style scoped>
.screen {
  width: 1236px;
  height: 2676px;
  overflow: hidden;
  background: #fff;
  font-family: Roboto, "Noto Sans CJK SC", sans-serif;
  display: flex;
  flex-direction: column;
  white-space: nowrap;
}

.screen > * {
  flex-shrink: 0;
}

svg {
  display: block;
  flex-shrink: 0;
}

i, em {
  font-style: normal;
}

/* header */
.top {
  height: 270px;
  background: #dd4440;
  color: #fff;
}

.status {
  display: flex;
  align-items: center;
  height: 140px;
  padding-left: 388px;
  color: #ffeceb;
}

.sim-text {
  width: 201px;
  font-size: 36.5px;
}

.i-wifi { margin-left: 10px; }

.speed {
  display: flex;
  flex-direction: column;
  width: 40px;
  margin-left: 15px;
  font-size: 25px;
  line-height: 30px;
  text-align: center;
}

.app365 {
  display: flex;
  flex-direction: column;
  width: 33px;
  height: 33px;
  margin-left: 18px;
  overflow: hidden;
  border-radius: 6px;
  background: #fff;
  text-align: center;
}

.app365 i {
  height: 12px;
  background: #5f86d8;
  font-size: 7px;
  line-height: 12px;
}

.app365 b {
  height: 13px;
  color: #1e2c4c;
  font-size: 14px;
  line-height: 13px;
}

.app365 em {
  height: 8px;
  background: #d9692f;
  font-size: 7px;
  line-height: 8px;
}

.i-eye { margin-left: 98px; }
.i-vib { margin-left: 10px; }
.i-gauge { margin-left: 11px; }
.i-bat { margin-left: 12px; }

.clock {
  margin-left: 13px;
  font-size: 39px;
  letter-spacing: -1.6px;
}

.nav {
  display: flex;
  height: 130px;
}

.back { margin: 14px 0 0 83px; }
.prev { margin: 32px 0 0 255px; }

.stock {
  width: 357px;
  margin-left: 35px;
  margin-top: -9px;
  overflow: hidden;
}

.stock h1 {
  margin: 0;
  height: 79px;
  font-size: 54px;
  font-weight: 500;
  line-height: 66px;
  text-align: center;
}

.code {
  display: flex;
  align-items: center;
  gap: 6px;
}

.code .num {
  flex-shrink: 0;
  width: 144px;
  font-size: 45px;
  font-weight: 500;
  letter-spacing: -2.5px;
  line-height: 42px;
}

.code i {
  flex-shrink: 0;
  height: 38px;
  padding: 0 10px;
  border-radius: 4px;
  background: #d69356;
  font-size: 31px;
  line-height: 37px;
}

.next { margin: 32px 0 0 35px; }
.robot { margin: 12px 0 0 95px; }
.search { margin: 17px 0 0 75px; }

/* quote */
.quote {
  display: flex;
  position: relative;
  box-sizing: border-box;
  height: 276px;
  padding-top: 20px;
  border-bottom: 14px solid #f4f4f4;
}

.price {
  width: 293px;
  padding-left: 28px;
  color: #43962a;
}

.last {
  margin-top: 18px;
  font-size: 103px;
  font-weight: 500;
  letter-spacing: -7px;
  line-height: 120px;
}

.change {
  display: flex;
  gap: 35px;
  margin-top: 1px;
  font-size: 46px;
  font-weight: 500;
  letter-spacing: -3.2px;
  line-height: 54px;
}

.col {
  width: 274px;
  margin-right: 45px;
}

.col:nth-of-type(4) {
  margin-right: 0;
}

.stat {
  display: flex;
  justify-content: space-between;
  height: 75.5px;
  line-height: 75.5px;
}

.label {
  color: #666;
  font-size: 47.5px;
}

.label.wide {
  font-size: 50px;
}

.label sup {
  font-size: 26px;
  letter-spacing: -0.5px;
  line-height: 0;
  vertical-align: 18px;
}

.value {
  color: #2e2e2e;
  font-size: 50px;
  font-weight: 500;
  letter-spacing: -2.2px;
}

.value.down { color: #43962a; }
.value.up { color: #c5473f; }
.value.tight { font-size: 47px; letter-spacing: -3px; }

.corner {
  position: absolute;
  right: 8px;
  bottom: 15px;
}

/* period tabs */
.tabs {
  display: flex;
  position: relative;
  height: 131px;
  padding-left: 41px;
  color: #666;
  font-size: 48px;
  line-height: 112px;
}

.tab {
  display: flex;
  align-items: center;
  height: 114px;
}

.t1 { width: 179px; }
.t2 { width: 164px; }
.t3 { width: 164px; }
.t4 { width: 163px; }
.t5 { width: 182px; }
.t6 { width: 248px; }
.t6 svg { margin-left: 8px; margin-bottom: 2px; }
.hex { margin-top: 30px; }

.active {
  position: relative;
  color: #2a2a2a;
  font-weight: 700;
}

.active::after {
  content: "";
  position: absolute;
  left: 20px;
  bottom: 4px;
  width: 41px;
  height: 10px;
  border-radius: 5px;
  background: #d3443d;
}

.periods {
  display: flex;
  gap: 28px;
  height: 109px;
  padding-left: 28px;
  border-bottom: 2px solid #e6e6e6;
  overflow: hidden;
}

.periods span {
  flex: 0 0 179px;
  box-sizing: border-box;
  height: 90px;
  border: 1.5px solid #999;
  border-radius: 13px;
  color: #666;
  font-size: 44.5px;
  letter-spacing: -0.5px;
  line-height: 91px;
  text-align: center;
}

/* moving average legend */
.legend {
  display: flex;
  height: 154px;
  padding-left: 21px;
}

.picker {
  display: flex;
  align-items: center;
  gap: 13px;
  height: 55px;
  padding: 0 17px 0 14px;
  border-radius: 7px;
  background: #f1f1f1;
  color: #333;
  font-size: 40.5px;
}

.picker.small {
  gap: 13px;
  height: 57px;
  margin-top: 50px;
  padding: 0 13px 0 10px;
  font-size: 36.5px;
}

.ma {
  width: 933px;
  margin-left: 16px;
  padding-top: 12px;
}

.ma-row {
  display: flex;
  height: 48px;
  font-size: 37.5px;
  font-weight: 500;
  letter-spacing: -1.3px;
  line-height: 48px;
}

.ma-row:first-child {
  margin-left: 1px;
}

.ma-row.more {
  align-items: center;
  gap: 20px;
  color: #618fd5;
  font-size: 48px;
  letter-spacing: 8px;
}

.more svg { margin-left: -10px; }

.adjust {
  padding-top: 11px;
  color: #444;
  font-size: 38px;
  line-height: 50px;
}

/* chart texts */
.kline text {
  font-family: Roboto, "Noto Sans CJK SC", sans-serif;
}

.scale text {
  fill: #8f8f98;
  font-size: 40px;
  font-weight: 600;
}

.fib text {
  fill: #26262c;
  font-size: 37px;
}

.fib .peak { fill: #000; }
.fib .boll { font-size: 42px; }

.low {
  font-size: 36px;
}

.watch {
  fill: #4b69cf;
  font-size: 34px;
  font-weight: 500;
}

.balloon { opacity: .62; }

.balloon text {
  fill: #f4fbf4;
  font-size: 34px;
  text-anchor: middle;
}

.plate { opacity: .74; }

.badge text {
  fill: #fff;
  font-size: 36px;
  opacity: .92;
  text-anchor: middle;
}

.tile { opacity: .3; }
.tile rect { fill: #f3a030; }

.tile text {
  fill: #d97400;
  font-size: 38px;
  text-anchor: middle;
}

.nine rect { opacity: .45; }

.nine text {
  font-size: 36px;
  font-weight: 500;
  text-anchor: middle;
}

/* date axis */
.axis {
  display: grid;
  grid-template-columns: 243px 303px 303px 251px 107px;
  grid-template-rows: 17px 1fr;
  height: 88px;
  padding-left: 14px;
  background: linear-gradient(90deg, #fff 0%, rgba(255, 255, 255, 0) 40%), linear-gradient(#f1f1f1, #fbfbfb 80%);
  color: #808080;
  font-size: 39.5px;
  font-weight: 500;
  letter-spacing: -0.7px;
  line-height: 58px;
}

.axis i {
  grid-row: 1;
  width: 3px;
  height: 17px;
  background: #888;
}

.k1 { grid-column: 2; margin-left: 50px; }
.k2 { grid-column: 3; margin-left: 51px; }
.k3 { grid-column: 4; margin-left: 52px; }
.k4 { grid-column: 5; margin-left: 105px; }
.axis span { grid-row: 2; height: 58px; }
.axis .d0 { grid-column: 1; color: #646464; }
.d1 { grid-column: 2; background: linear-gradient(90deg, #ccc, #808080 40px); background-clip: text; color: transparent; }
.d2 { grid-column: 3; }
.d3 { grid-column: 4; }
.d4 { grid-column: 5; }

/* indicator panels */
.panel {
  display: grid;
}

.panel > * {
  grid-area: 1 / 1;
}

.p1 { height: 248px; }
.p2 { height: 248px; }
.p3 { height: 244px; }

.bar {
  display: flex;
  align-items: center;
  height: 55px;
  padding: 14px 0 0 28px;
}

.help {
  box-sizing: border-box;
  width: 41px;
  height: 41px;
  margin-left: 8px;
  border: 3px solid #c2c2c2;
  border-radius: 50%;
  color: #bbb;
  font-size: 31px;
  line-height: 36px;
  text-align: center;
}

.item {
  font-size: 40.5px;
  font-weight: 500;
  letter-spacing: -1.5px;
}

.a1 { width: 264px; margin-left: 20px; color: #c24a42; }
.a2 { width: 184px; color: #4b9138; }
.a3 { color: #111; }

.signals {
  display: flex;
  gap: 13px;
  margin-left: 19px;
  color: #333;
  font-size: 40px;
}

.signals span {
  display: flex;
  align-items: center;
  gap: 5px;
}

.signals i {
  box-sizing: border-box;
  width: 12px;
  height: 38px;
  border: 3px solid;
}

.ad-wrap {
  display: flex;
  justify-content: flex-end;
  padding-right: 14px;
}

.ad {
  display: flex;
  flex-direction: column;
  align-items: center;
  box-sizing: border-box;
  width: 332px;
  height: 236px;
  padding: 9px 2px 0 0;
  background: linear-gradient(#f6f6f7 10%, #f3ebee 42%, #eff2f3 60%, #f4f3f6 85%);
}

.ad b {
  margin-top: 10px;
  color: #222;
  font-size: 41px;
  font-weight: 400;
  line-height: 62px;
}

.ad span {
  display: flex;
  align-items: center;
  gap: 17px;
  color: #666;
  font-size: 34px;
  line-height: 52px;
}

.f1 { width: 203px; margin-left: 15px; color: #a05a56; }
.f2 { width: 223px; color: #5b957a; }
.f3 { width: 266px; color: #1c1c1c; }

.link {
  color: #618fd5;
  font-size: 41px;
}

.ratio {
  padding-left: 29px;
  color: #64a5dc;
  font-size: 40px;
  font-weight: 500;
  letter-spacing: -1.7px;
  line-height: 40px;
}

/* lower tabs */
.info-tabs {
  display: flex;
  height: 78px;
  padding-left: 66px;
  border-top: 14px solid #f4f4f4;
  overflow: hidden;
  color: #666;
  font-size: 50px;
  line-height: 144px;
}

.info-tabs span { flex-shrink: 0; }
.info-tabs svg { margin-top: 48px; }

.level {
  width: 303px;
  margin-left: 38px;
  color: #7b5122;
  font-size: 62px;
  font-style: italic;
  font-weight: 700;
  letter-spacing: 2px;
  line-height: 138px;
}

.w1, .w2, .w3, .w4 { width: 178.5px; }
.w5 { color: #c4c4c4; }

footer {
  display: flex;
  height: 176px;
  background: #242424;
  color: #d2d2d2;
  font-size: 38px;
}

.sector {
  display: flex;
  flex-direction: column;
  align-items: center;
  width: 284px;
  padding-top: 14px;
  line-height: 70px;
}

.sector span {
  margin-top: 7px;
  color: #c4c4c4;
  font-size: 38.5px;
}

.sector b {
  color: #86ee62;
  font-size: 41px;
  font-weight: 400;
  letter-spacing: -0.3px;
}

.tool {
  display: flex;
  flex-direction: column;
  align-items: center;
  width: 238px;
  padding-top: 27px;
  line-height: 62px;
}
</style>
